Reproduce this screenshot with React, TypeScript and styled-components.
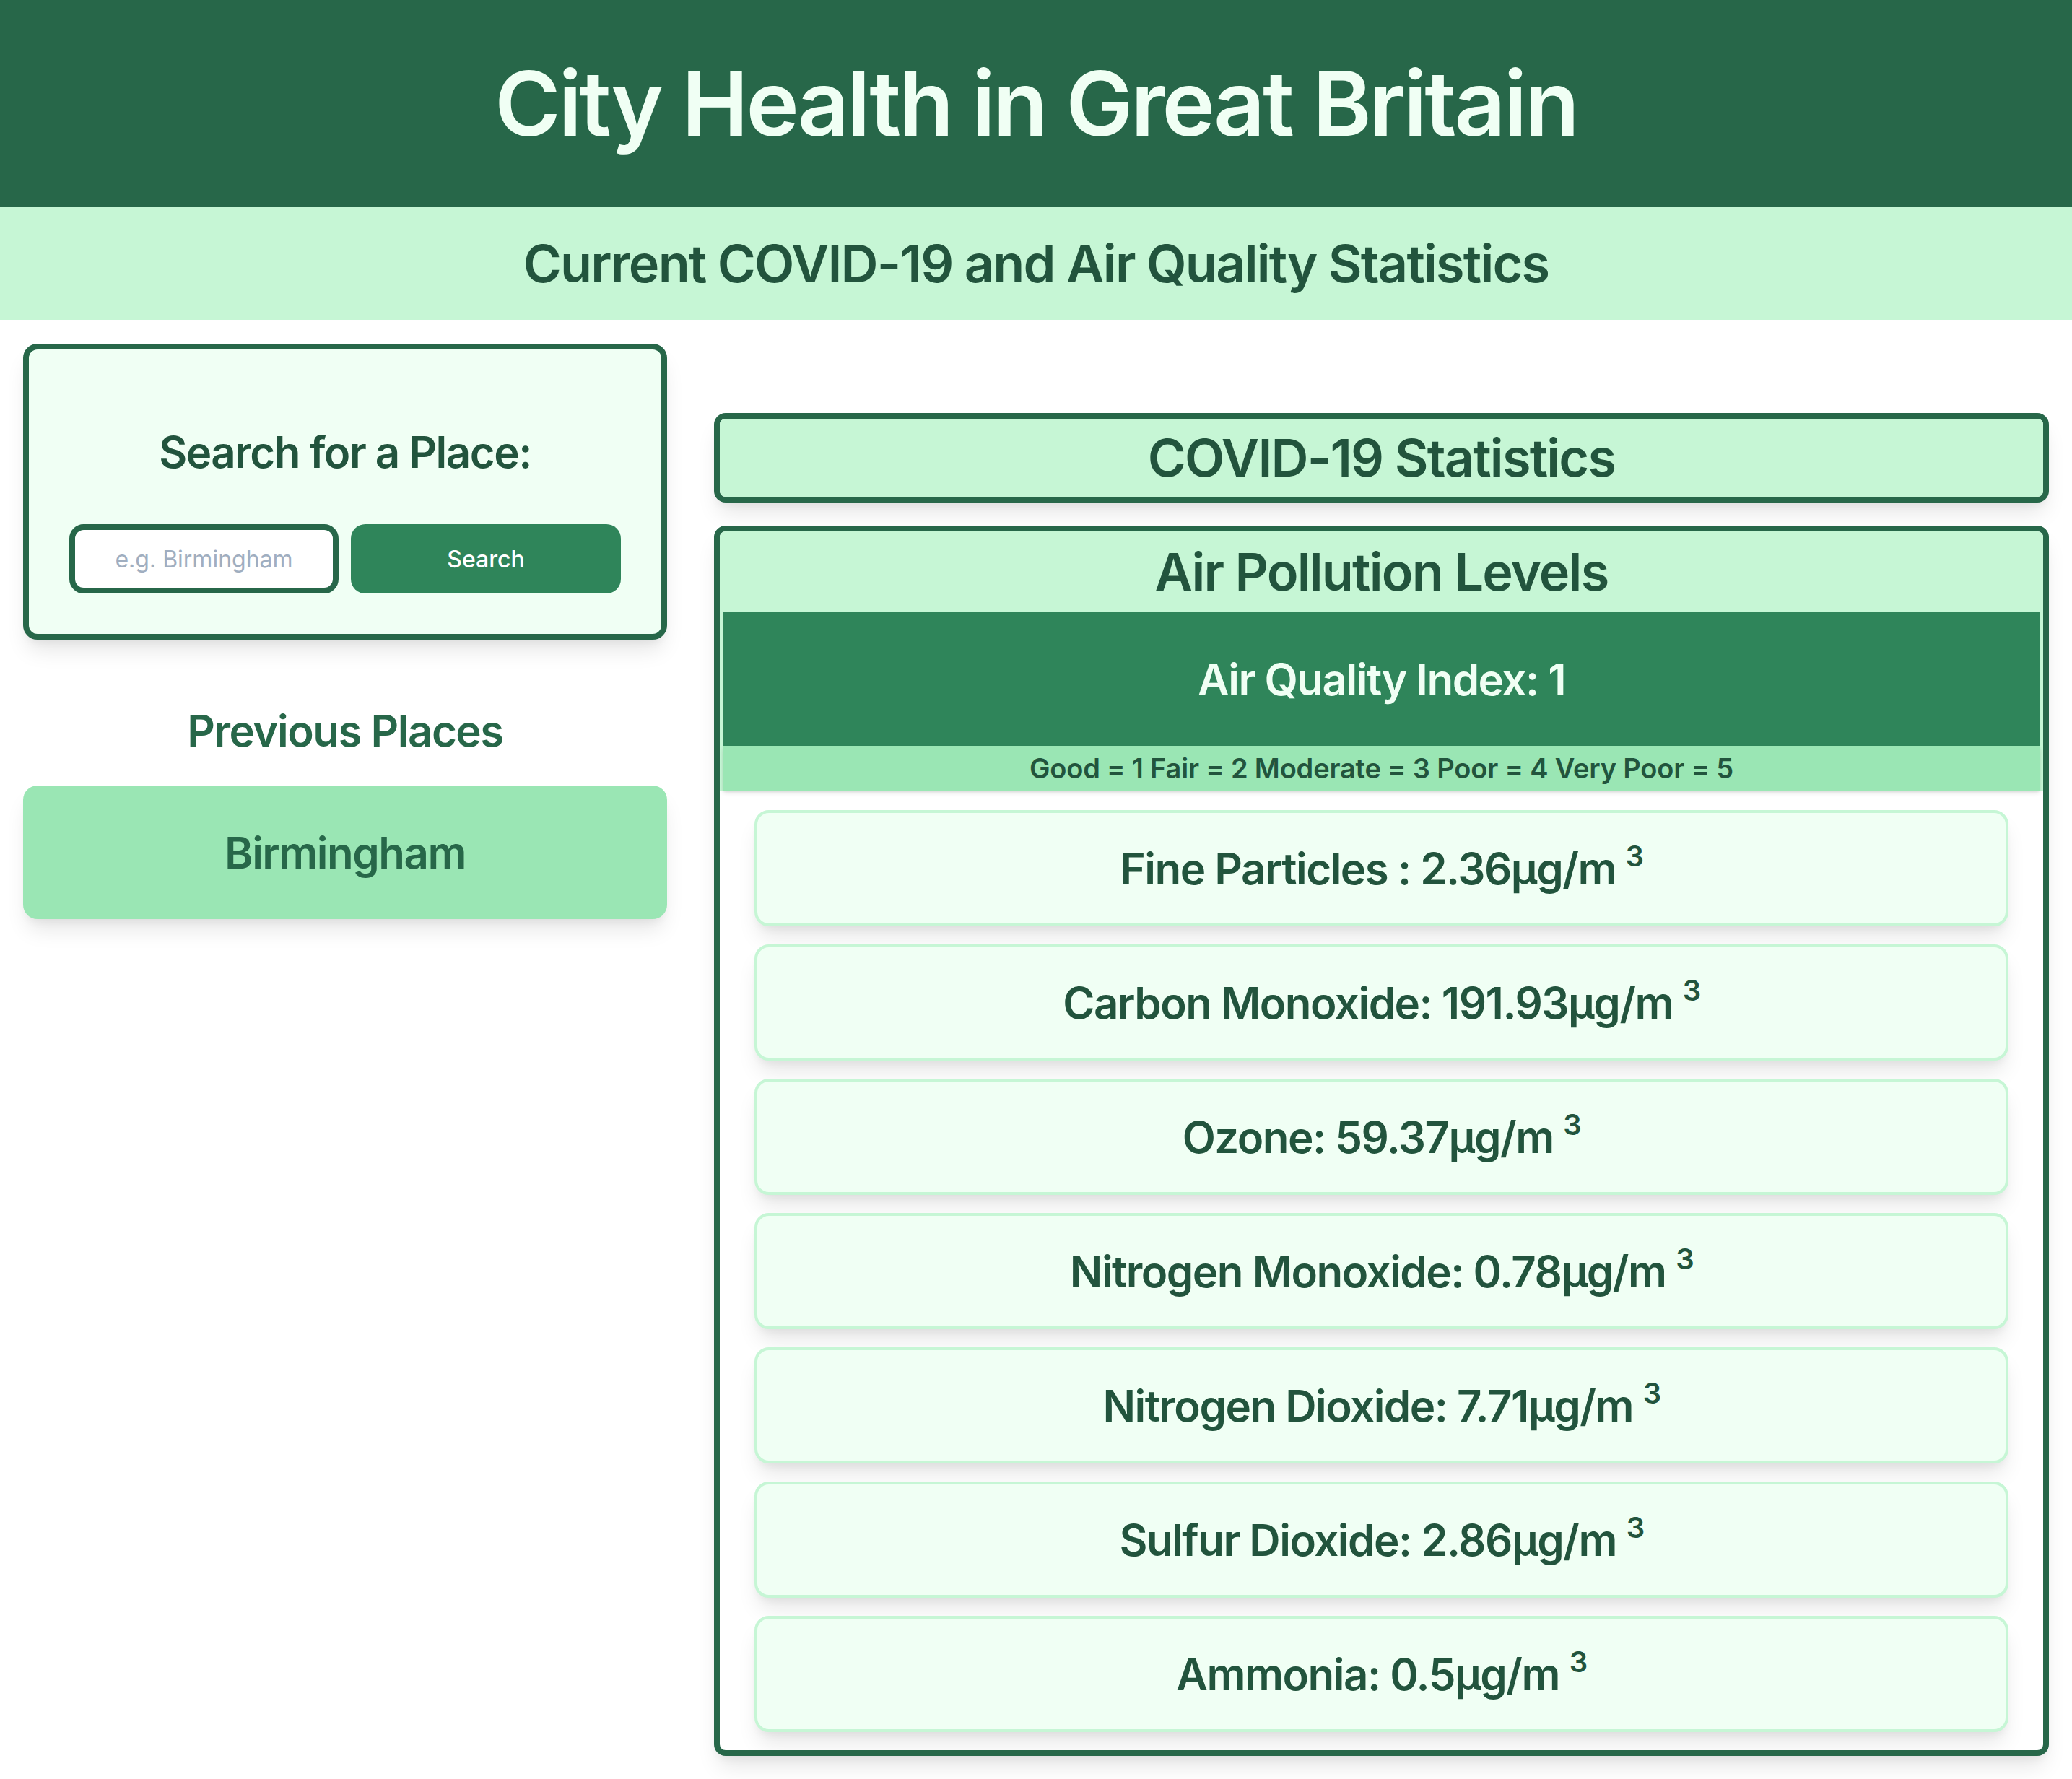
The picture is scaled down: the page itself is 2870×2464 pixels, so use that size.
import React from 'react';
import styled, { createGlobalStyle } from 'styled-components';

const GlobalStyle = createGlobalStyle`
	body {
		margin: 0;
		background: #fff;
		font-family: Inter, 'Noto Sans', sans-serif;
	}
	* {
		box-sizing: border-box;
	}
`;

const HeaderContainer = styled.header`
	height: 287px;
	background: #276749;
	display: flex;
	align-items: center;
	justify-content: center;
`;

const Title = styled.h1`
	margin: 0;
	font-size: 124px;
	line-height: 1.2;
	font-weight: 600;
	letter-spacing: -0.025em;
	color: #f0fff4;
`;

const SubHeader = styled.div`
	height: 156px;
	background: #c6f6d5;
	display: flex;
	align-items: center;
	justify-content: center;
`;

const SubTitle = styled.h2`
	margin: 0;
	font-size: 72px;
	line-height: 1.2;
	font-weight: 600;
	letter-spacing: -0.025em;
	color: #22543d;
`;

const PageBody = styled.main`
	display: flex;
	gap: 65px;
	padding: 0 32px 32px;
`;

const LeftColumn = styled.section`
	width: 892px;
	flex-shrink: 0;
	padding-top: 33px;
	display: flex;
	flex-direction: column;
`;

const RightColumn = styled.section`
	flex: 1;
	padding-top: 129px;
	display: flex;
	flex-direction: column;
	gap: 32px;
`;

const SearchCard = styled.div`
	height: 410px;
	background: #f0fff4;
	border: 8px solid #276749;
	border-radius: 20px;
	padding: 0 56px;
	box-shadow: 0 20px 30px -6px rgba(0, 0, 0, 0.1), 0 8px 12px -4px rgba(0, 0, 0, 0.05);
	display: flex;
	flex-direction: column;
	align-items: center;
`;

const CardHeading = styled.h3<{ $color?: string }>`
	margin: 0;
	font-size: 60px;
	line-height: 72px;
	font-weight: 600;
	letter-spacing: -0.025em;
	color: ${(p) => p.$color || '#22543d'};
	text-align: center;
`;

const SearchHeading = styled(CardHeading)`
	margin-top: 106px;
	margin-bottom: 64px;
`;

const SearchRow = styled.div`
	display: flex;
	gap: 17px;
	width: 764px;
`;

const SearchInput = styled.input`
	width: 373px;
	height: 96px;
	border: 8px solid #276749;
	border-radius: 20px;
	background: #fff;
	font-family: Inter, 'Noto Sans', sans-serif;
	font-size: 32px;
	text-align: center;
	color: #1a202c;
	outline: none;

	&::placeholder {
		color: #a0aec0;
	}
`;

const SearchButton = styled.button`
	flex: 1;
	height: 96px;
	border: none;
	border-radius: 20px;
	background: #2f855a;
	color: #fff;
	font-family: Inter, 'Noto Sans', sans-serif;
	font-size: 32px;
	font-weight: 500;
`;

const PreviousHeading = styled(CardHeading)`
	margin-top: 90px;
	margin-bottom: 40px;
`;

const PlaceCard = styled.div`
	height: 185px;
	border-radius: 20px;
	background: #9ae6b4;
	box-shadow: 0 20px 30px -6px rgba(0, 0, 0, 0.1), 0 8px 12px -4px rgba(0, 0, 0, 0.05);
	display: flex;
	align-items: center;
	justify-content: center;
	font-size: 60px;
	font-weight: 600;
	letter-spacing: -0.025em;
	color: #276749;
`;

const SectionBox = styled.div`
	border: 8px solid #276749;
	border-radius: 16px;
	overflow: hidden;
	background: #fff;
	box-shadow: 0 20px 30px -6px rgba(0, 0, 0, 0.1), 0 8px 12px -4px rgba(0, 0, 0, 0.05);
`;

const CovidHeader = styled.div`
	height: 108px;
	background: #c6f6d5;
	display: flex;
	align-items: center;
	justify-content: center;
`;

const SectionTitle = styled.h2`
	margin: 0;
	font-size: 72px;
	line-height: 1.2;
	font-weight: 600;
	letter-spacing: -0.025em;
	color: #22543d;
`;

const PollutionHeader = styled.div`
	background: #c6f6d5;
	padding: 0 4px;
	display: flex;
	flex-direction: column;
`;

const PollutionTitleRow = styled.div`
	height: 112px;
	display: flex;
	align-items: center;
	justify-content: center;
`;

const IndexBand = styled.div`
	height: 185px;
	background: #2f855a;
	display: flex;
	align-items: center;
	justify-content: center;
	font-size: 60px;
	font-weight: 600;
	letter-spacing: -0.025em;
	color: #f0fff4;
`;

const Legend = styled.div`
	height: 62px;
	background: #9ae6b4;
	box-shadow: 0 4px 6px -1px rgba(0, 0, 0, 0.12), 0 2px 4px -1px rgba(0, 0, 0, 0.08);
	display: flex;
	align-items: center;
	justify-content: center;
	font-size: 38px;
	font-weight: 600;
	letter-spacing: -0.005em;
	color: #22543d;
	position: relative;
`;

const MetricList = styled.div`
	padding: 27px 48px 25px;
	display: flex;
	flex-direction: column;
	gap: 25px;
`;

const MetricCard = styled.div`
	height: 161px;
	background: #f0fff4;
	border: 4px solid #c6f6d5;
	border-radius: 20px;
	box-shadow: 0 20px 30px -6px rgba(0, 0, 0, 0.1), 0 8px 12px -4px rgba(0, 0, 0, 0.05);
	display: flex;
	align-items: center;
	justify-content: center;
`;

const MetricText = styled.span`
	font-size: 60px;
	font-weight: 600;
	letter-spacing: -0.025em;
	color: #22543d;
	white-space: pre;
`;

const Unit = styled.sup`
	font-size: 40px;
	line-height: 0;
	vertical-align: 25px;
`;

const metrics = [
	{ label: 'Fine Particles :', value: 2.36 },
	{ label: 'Carbon Monoxide:', value: 191.93 },
	{ label: 'Ozone:', value: 59.37 },
	{ label: 'Nitrogen Monoxide:', value: 0.78 },
	{ label: 'Nitrogen Dioxide:', value: 7.71 },
	{ label: 'Sulfur Dioxide:', value: 2.86 },
	{ label: 'Ammonia:', value: 0.5 },
];

const App = () => {
	return (
		<>
			<GlobalStyle />
			<HeaderContainer>
				<Title>City Health in Great Britain</Title>
			</HeaderContainer>
			<SubHeader>
				<SubTitle>Current COVID-19 and Air Quality Statistics</SubTitle>
			</SubHeader>
			<PageBody>
				<LeftColumn>
					<SearchCard>
						<SearchHeading>Search for a Place:</SearchHeading>
						<SearchRow>
							<SearchInput placeholder="e.g. Birmingham" />
							<SearchButton>Search</SearchButton>
						</SearchRow>
					</SearchCard>
					<PreviousHeading $color="#276749">Previous Places</PreviousHeading>
					<PlaceCard>Birmingham</PlaceCard>
				</LeftColumn>
				<RightColumn>
					<SectionBox>
						<CovidHeader>
							<SectionTitle>COVID-19 Statistics</SectionTitle>
						</CovidHeader>
					</SectionBox>
					<SectionBox>
						<PollutionHeader>
							<PollutionTitleRow>
								<SectionTitle>Air Pollution Levels</SectionTitle>
							</PollutionTitleRow>
							<IndexBand>Air Quality Index: 1</IndexBand>
							<Legend>Good = 1 Fair = 2 Moderate = 3 Poor = 4 Very Poor = 5</Legend>
						</PollutionHeader>
						<MetricList>
							{metrics.map((m) => (
								<MetricCard key={m.label}>
									<MetricText>
										{`${m.label} ${m.value}µg/m `}
										<Unit>3</Unit>
									</MetricText>
								</MetricCard>
							))}
						</MetricList>
					</SectionBox>
				</RightColumn>
			</PageBody>
		</>
	);
};

export default App;
